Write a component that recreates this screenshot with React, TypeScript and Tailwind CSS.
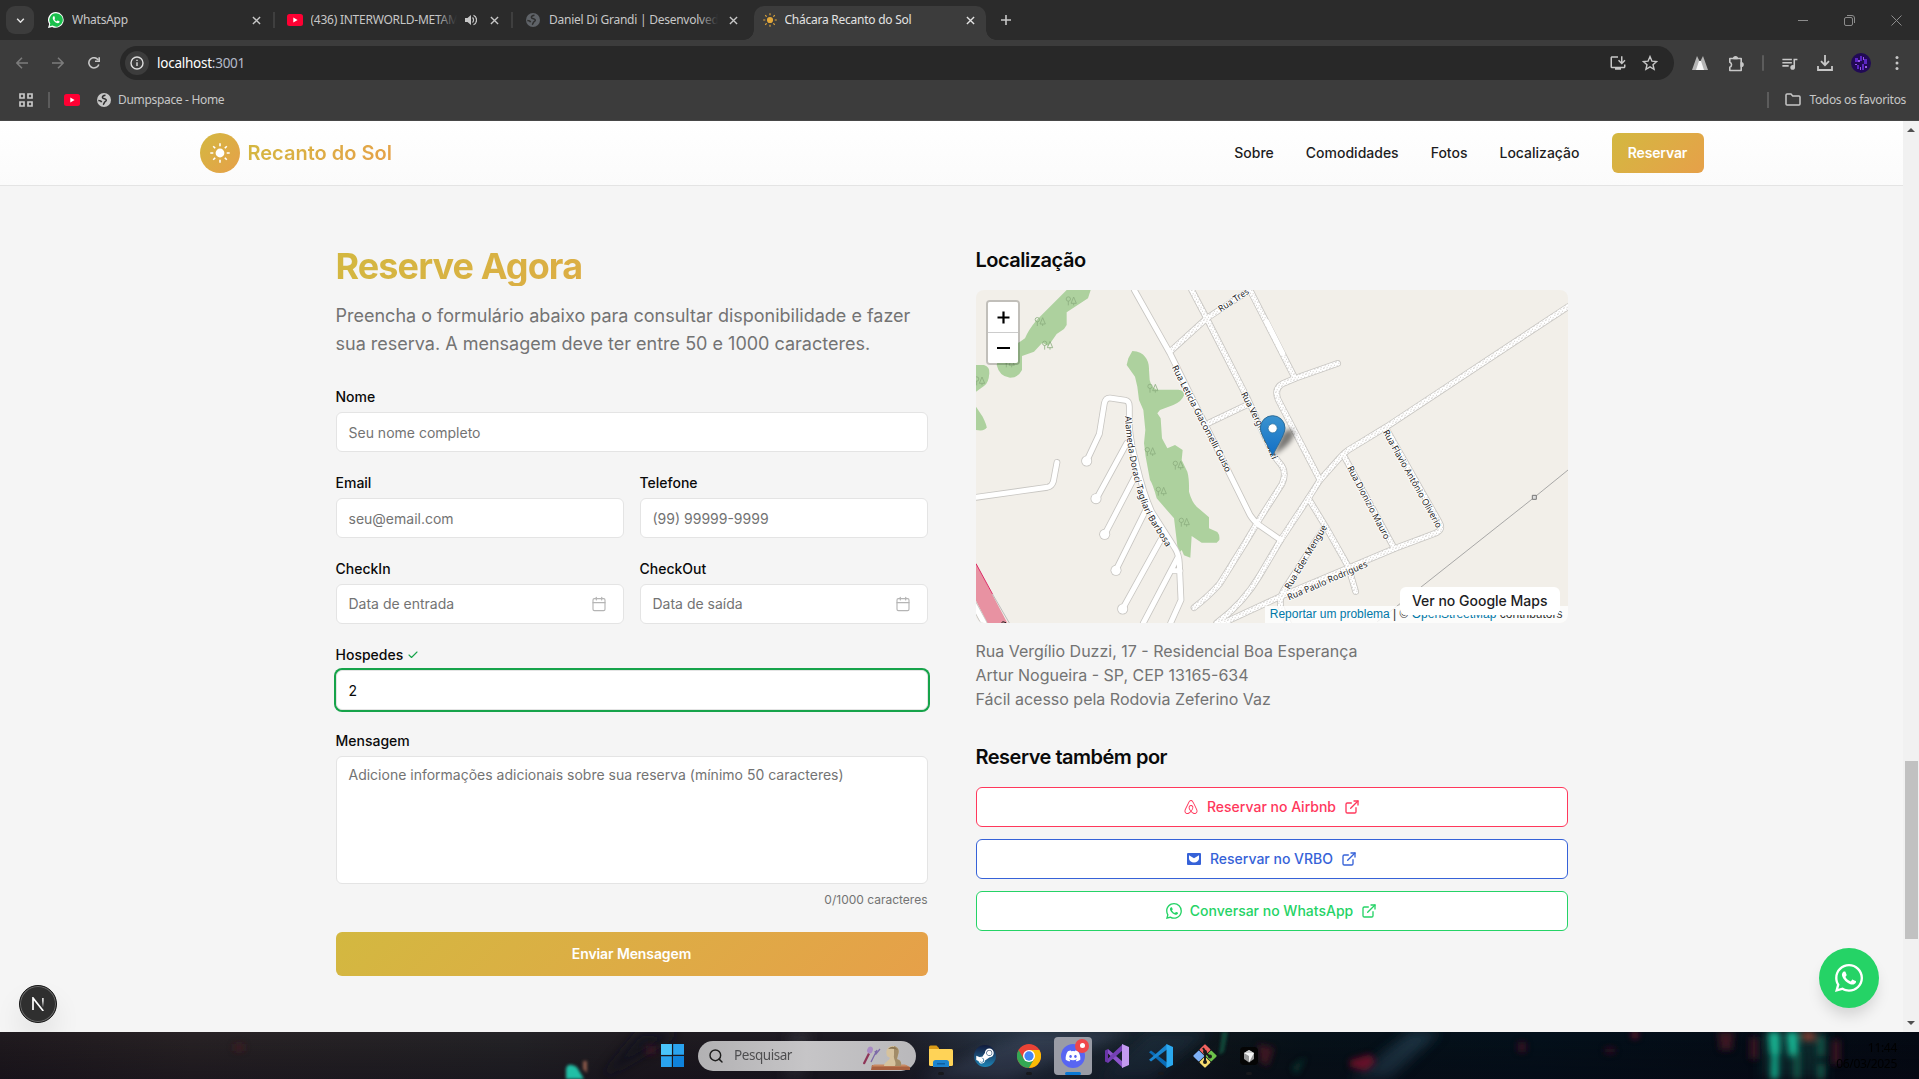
import React from 'react';
import type { ReactNode } from 'react';
import { FaAirbnb, FaDiscord, FaSteamSymbol, FaWhatsapp } from 'react-icons/fa';
import { BsWhatsapp } from 'react-icons/bs';
import { MdOutlineInstallDesktop, MdOutlineQueueMusic } from 'react-icons/md';
import { Calendar, Check, ExternalLink, Search } from 'lucide-react';

/* ---------- small drawings ---------- */

const Close = ({ className = '' }: { className?: string }) => (
  <svg viewBox="0 0 10 10" className={`size-[9px] shrink-0 ${className}`} stroke="currentColor" strokeWidth="1.5">
    <path d="M1 1l8 8M9 1l-8 8" />
  </svg>
);

const Globe = ({ className = '' }: { className?: string }) => (
  <svg viewBox="0 0 16 16" className={`size-4 shrink-0 ${className}`}>
    <circle cx="8" cy="8" r="7" fill="currentColor" />
    <path
      d="M9.500 3.200C7.500 3.400 6.300 4.200 6.400 5.500c.2 1.500 2.800 1 3.700 2.100.6.900-.3 1.700-1.200 2.200-.7.500-.6 1.600-1.700 2.900M2.300 8.600c1.500 0 2.900.4 3.300 1.700"
      fill="none"
      stroke="#2f2f2f"
      strokeWidth="1.5"
    />
  </svg>
);

const YouTube = () => (
  <svg viewBox="0 0 16 12" className="h-3 w-4 shrink-0">
    <rect width="16" height="12" rx="2.500" fill="#f03" />
    <path d="M6.300 3.500v5L10.600 6z" fill="#fff" />
  </svg>
);

const SunIcon = ({ className = '', color = '#fff' }: { className?: string; color?: string }) => (
  <svg viewBox="0 0 20 20" className={className} fill={color} stroke={color} strokeWidth="1.6">
    <circle cx="10" cy="10" r="4.400" stroke="none" />
    <path d="M10 .3v3M10 16.700v3M.3 10h3M16.700 10h3M3.200 3.200l2 2M14.800 14.800l2 2M3.200 16.800l2-2M14.800 5.200l2-2" />
  </svg>
);

/* ---------- browser chrome ---------- */

type TabProps = { icon: ReactNode; title: string; audio?: boolean; active?: boolean; divider?: boolean };

const Tab = ({ icon, title, audio, active, divider }: TabProps) => (
  <div
    className={`relative flex h-[34px] items-center pb-[6px] ${
      active
        ? 'ml-[2px] w-[232px] rounded-t-[10px] bg-[#3c3c3c] pr-[11px] pl-[9px] text-[#e3e3e3]'
        : 'w-[238.5px] pr-[14px] pl-[12px] text-[#c7c7c7]'
    }`}
  >
    {icon}
    <span className="relative ml-2 min-w-0 flex-1 overflow-hidden whitespace-nowrap">
      {title}
      {!active && <span className="absolute inset-y-0 right-0 w-5 bg-linear-to-r from-transparent to-[#2b2b2b]" />}
    </span>
    {audio && (
      <svg viewBox="0 0 12 12" className="mr-[13px] ml-2 size-3" fill="currentColor">
        <path d="M0 4h2.500L6 1v10L2.500 8H0z" />
        <path d="M7.500 3.500a3.500 3.500 0 010 5M8.500 1.200a5.300 5.300 0 010 9.600" fill="none" stroke="currentColor" strokeWidth="1.200" />
      </svg>
    )}
    <Close className={active || audio ? '' : 'ml-[11px]'} />
    {divider && <span className="absolute top-[6px] right-0 h-4 w-[2px] bg-[#3f3f3f]" />}
    {active && (
      <>
        <span className="absolute bottom-0 -left-[10px] size-[10px] bg-[radial-gradient(circle_at_0_0,transparent_9.500px,#3c3c3c_10px)]" />
        <span className="absolute -right-[10px] bottom-0 size-[10px] bg-[radial-gradient(circle_at_100%_0,transparent_9.500px,#3c3c3c_10px)]" />
      </>
    )}
  </div>
);

const WhatsAppTabIcon = () => (
  <svg viewBox="0 0 16 16" className="size-4 shrink-0">
    <path d="M8 0a7.900 7.900 0 00-6.800 12L0 16l4.100-1.100A7.900 7.900 0 108 0z" fill="#fff" />
    <path d="M8 1.200a6.700 6.700 0 00-5.700 10.200L1.700 14.300l2.900-.7A6.700 6.700 0 108 1.200z" fill="#1bc04d" />
    <path d="M5.500 4.200c-1.600 1.300-.6 3.600 1 5.200s3.800 2.500 5 .9c.3-.5.2-.8-.1-1l-1.500-.7c-.6-.2-.9.9-1.400.7C7.400 8.800 6.900 8 6.500 7.200c-.1-.4.7-.7.5-1.200l-.6-1.500c-.2-.4-.5-.5-.9-.3z" fill="#fff" />
  </svg>
);

const TabStrip = () => (
  <div className="flex h-10 items-end bg-[#2b2b2b] text-[12px]">
    <div className="mb-[6px] ml-[6px] flex size-7 items-center justify-center rounded-[9px] bg-[#3c3c3c]">
      <svg viewBox="0 0 10 6" className="h-[5px] w-[9px]" fill="none" stroke="#e3e3e3" strokeWidth="1.800">
        <path d="M1 1l4 4 4-4" />
      </svg>
    </div>
    <div className="ml-[2px] flex items-end tracking-[-0.25px]">
      <Tab icon={<WhatsAppTabIcon />} title="WhatsApp" divider />
      <Tab icon={<YouTube />} title="(436) INTERWORLD-METAM" audio divider />
      <Tab icon={<Globe className="text-[#5f6368]" />} title="Daniel Di Grandi | Desenvolvedor" />
      <Tab icon={<SunIcon className="size-[14px] shrink-0" color="#e3a83a" />} title="Chácara Recanto do Sol" active />
    </div>
    <svg viewBox="0 0 12 12" className="mb-[14px] ml-[14px] size-3" stroke="#c7c7c7" strokeWidth="1.600">
      <path d="M6 1v10M1 6h10" />
    </svg>
    <div className="mr-[17px] mb-[14px] ml-auto flex items-center gap-[36px] text-[#8c8c8c]">
      <span className="h-px w-[10px] bg-current" />
      <svg viewBox="0 0 11 11" className="size-[11px]" fill="none" stroke="currentColor">
        <rect x=".5" y="2.500" width="8" height="8" rx="1.500" />
        <path d="M3 .5h5a2.500 2.500 0 012.500 2.500v5" />
      </svg>
      <svg viewBox="0 0 11 11" className="size-[11px]" stroke="currentColor">
        <path d="M.5.5l10 10M10.500.5l-10 10" />
      </svg>
    </div>
  </div>
);

const Toolbar = () => (
  <div className="flex h-[46px] items-center bg-[#3c3c3c]">
    <div className="ml-4 flex items-center gap-6">
      <svg viewBox="0 0 12 12" className="size-3" fill="none" stroke="#7c7c7c" strokeWidth="1.500">
        <path d="M12 6H1M6 .8L.9 6 6 11.200" />
      </svg>
      <svg viewBox="0 0 12 12" className="size-3" fill="none" stroke="#7c7c7c" strokeWidth="1.500">
        <path d="M0 6h11M6 .8L11.100 6 6 11.200" />
      </svg>
      <svg viewBox="0 0 12 12" className="size-3" fill="none" stroke="#c7c7c7" strokeWidth="1.600">
        <path d="M10.800 7.400A5.100 5.100 0 1110 2.700M11.200.2v4.100H7" />
      </svg>
    </div>
    <div className="ml-[20px] flex h-[34px] w-[1554px] items-center rounded-full bg-[#282828] pl-[5px] text-[13.500px] text-[#c7c7c7]">
      <span className="flex size-6 items-center justify-center rounded-full bg-[#3c3c3c]">
        <svg viewBox="0 0 14 14" className="size-[14px]" fill="none" stroke="#dcdcdc" strokeWidth="1.400">
          <circle cx="7" cy="7" r="6" />
          <path d="M7 6.300V10M7 3.800v1.300" />
        </svg>
      </span>
      <span className="ml-2 tracking-[-0.25px] text-white">
        localhost<span className="text-[#b4bac8]">:3001</span>
      </span>
      <MdOutlineInstallDesktop className="ml-auto size-[18px]" />
      <svg viewBox="0 0 16 16" className="mr-[16px] ml-[15px] size-4" fill="none" stroke="currentColor" strokeWidth="1.400">
        <path d="M8 1.600l1.900 4.500 4.800.4-3.700 3.200 1.100 4.700L8 11.900l-4.100 2.500L5 9.700 1.300 6.500l4.800-.4z" />
      </svg>
    </div>
    <div className="flex flex-1 items-center text-[#c7c7c7]">
      <svg viewBox="0 0 16 14" className="ml-[18px] h-[14px] w-4">
        <path d="M0 14L5 0l2.500 5L6 14zM16 14L11 0 8.500 5 10 14z" fill="#b5b5b5" />
        <path d="M4 14l3-9h2l3 9z" fill="#f5f5f5" />
      </svg>
      <svg viewBox="0 0 17 17" className="ml-[20px] size-[17px]" fill="none" stroke="currentColor" strokeWidth="1.600" strokeLinejoin="round">
        <path d="M1.800 3.500h11.400v12H1.800v-3.300a2.600 2.600 0 000-4.900z" />
        <path d="M5.700 3.500a1.800 1.800 0 013.600 0zM13.200 7.700a1.800 1.800 0 010 3.600z" fill="currentColor" />
      </svg>
      <span className="ml-[17px] h-4 w-[2px] rounded bg-[#5c5c5c]" />
      <MdOutlineQueueMusic className="ml-[16px] size-[19px]" />
      <svg viewBox="0 0 16 16" className="ml-[18px] size-4" fill="none" stroke="currentColor" strokeWidth="1.800">
        <path d="M8 0v10M4 6.200l4 4 4-4M1 11v4h14v-4" />
      </svg>
      <svg viewBox="0 0 20 20" className="ml-[18px] size-5">
        <circle cx="10" cy="10" r="10" fill="#210a55" />
        <path d="M4 5h3v4H4zM9 3h2v5H9zM13 6h3v5h-3zM6 12h2v4H6zM11 11h2v6h-2z" fill="#5b25c4" />
        <path d="M7 7h2v2H7zM12 4h1v3h-1zM4 11h2v1H4zM14 13h2v2h-2zM9 14h1v3H9z" fill="#9a55e8" />
      </svg>
      <svg viewBox="0 0 4 16" className="ml-[24px] h-4 w-1" fill="currentColor">
        <circle cx="2" cy="2.500" r="1.500" />
        <circle cx="2" cy="8" r="1.500" />
        <circle cx="2" cy="13.500" r="1.500" />
      </svg>
    </div>
  </div>
);

const Bookmarks = () => (
  <div className="flex h-[35px] items-center border-b border-[#474747] bg-[#3c3c3c] pb-[7px] text-[12px] tracking-[-0.32px] text-[#c7c7c7]">
    <svg viewBox="0 0 14 14" className="ml-[19px] size-[14px]" fill="none" stroke="currentColor" strokeWidth="1.700">
      <path d="M1 1h4v4H1zM9 1h4v4H9zM1 9h4v4H1zM9 9h4v4H9z" />
    </svg>
    <span className="mr-[14px] ml-[15px] h-4 w-[2px] bg-[#5c5c5c]" />
    <YouTube />
    <Globe className="mr-[6px] ml-[16px] text-[#c7c7c7]" />
    Dumpspace - Home
    <span className="mr-[16px] ml-auto h-4 w-[2px] bg-[#5c5c5c]" />
    <svg viewBox="0 0 16 13" className="mr-[8px] h-[13px] w-4" fill="none" stroke="currentColor" strokeWidth="1.500">
      <path d="M1 2a1 1 0 011-1h4l1.700 2H14a1 1 0 011 1v7a1 1 0 01-1 1H2a1 1 0 01-1-1z" />
    </svg>
    <span className="mr-[13px]">Todos os favoritos</span>
  </div>
);

/* ---------- site ---------- */

const SiteHeader = () => (
  <header className="h-[65px] shrink-0 border-b border-[#e4e4e4] bg-linear-to-b from-white to-[#fbfbfb]">
    <div className="mx-auto flex h-16 w-[1536px] items-center px-4">
      <div className="flex items-center gap-2">
        <span className="flex size-10 items-center justify-center rounded-full bg-linear-135 from-[#d3b840] to-[#e6a049]">
          <SunIcon className="size-5" />
        </span>
        <span className="bg-linear-135 from-[#d3b840] to-[#e6a049] bg-clip-text text-xl font-semibold text-transparent">
          Recanto do Sol
        </span>
      </div>
      <nav className="ml-auto flex items-center gap-8 text-sm font-medium text-[#1d1d1f]">
        <a>Sobre</a>
        <a>Comodidades</a>
        <a>Fotos</a>
        <a>Localização</a>
        <button className="h-10 w-[92px] rounded-md bg-linear-135 from-[#d3b840] to-[#e6a049] font-semibold tracking-[-0.15px] text-white">
          Reservar
        </button>
      </nav>
    </div>
  </header>
);

type FieldProps = { label: string; placeholder?: string; value?: string; date?: boolean; valid?: boolean };

const Field = ({ label, placeholder, value, date, valid }: FieldProps) => (
  <div className="flex-1">
    <label className="mb-2 flex h-[14px] items-center gap-1 text-sm leading-none font-medium text-[#0a0a0a]">
      {label}
      {valid && <Check className="size-3 text-[#16a34a]" strokeWidth={2.2} />}
    </label>
    <div
      className={`flex h-10 items-center rounded-md border border-[#e4e4e4] bg-white px-3 text-sm ${
        valid ? 'text-[#0a0a0a] ring-2 ring-[#16a34a]' : 'text-[#737373]'
      } ${date ? '' : 'pt-[2px]'}`}
    >
      {value ?? placeholder}
      {date && <Calendar className="mr-[4px] ml-auto size-4 text-[#b5b5b5]" strokeWidth={1.7} />}
    </div>
  </div>
);

const BookingForm = () => (
  <div className="w-[592px]">
    <h2 className="bg-linear-135 from-[#d3b840] to-[#e6a049] bg-clip-text text-4xl leading-10 font-bold tracking-tight text-transparent">
      Reserve Agora
    </h2>
    <p className="mt-4 text-lg leading-7 text-[#737373]">
      Preencha o formulário abaixo para consultar disponibilidade e fazer
      <br />
      sua reserva. A mensagem deve ter entre 50 e 1000 caracteres.
    </p>
    <div className="mt-8 flex flex-col gap-6">
      <Field label="Nome" placeholder="Seu nome completo" />
      <div className="flex gap-4">
        <Field label="Email" placeholder="seu@email.com" />
        <Field label="Telefone" placeholder="(99) 99999-9999" />
      </div>
      <div className="flex gap-4">
        <Field label="CheckIn" placeholder="Data de entrada" date />
        <Field label="CheckOut" placeholder="Data de saída" date />
      </div>
      <Field label="Hospedes" value="2" valid />
      <div>
        <label className="mb-2 block text-sm leading-none font-medium text-[#0a0a0a]">Mensagem</label>
        <div className="h-32 rounded-md border border-[#e4e4e4] bg-white px-3 py-2 text-sm text-[#737373]">
          Adicione informações adicionais sobre sua reserva (mínimo 50 caracteres)
        </div>
        <div className="mt-2 text-right text-xs text-[#737373]">0/1000 caracteres</div>
      </div>
      <button className="h-11 rounded-md bg-linear-135 from-[#d3b840] to-[#e6a049] text-sm font-semibold tracking-[-0.1px] text-white">
        Enviar Mensagem
      </button>
    </div>
  </div>
);

const pavedRoads = [
  'M523 180L630 370L870 855Q880 872 900 887L962 930',
  'M380 693L418 612L433 520Q437 503 450 504L496 511Q508 513 508 530V590Q512 640 530 705Q550 790 575 845L645 955Q657 975 658 1000L663 1110L632 1179',
  'M500 640L410 805',
  'M522 745L435 912',
  'M560 835L468 1020',
  'M602 930L488 1136',
  'M652 985L550 1179',
  'M640 1022H660',
  'M48 802L262 772Q276 769 280 755L291 697',
  'M40 1120L72 1179',
];

const gravelRoads = [
  'M695 180L740 265L860 500L940 675L966 708Q980 730 966 762L900 865L855 940L780 1060Q750 1095 702 1133',
  'M630 365L740 265L870 180',
  'M870 180L1005 445',
  'M1133 400L1005 445L970 460Q940 475 955 510L1080 750',
  'M1824 230L1280 590L1165 660Q1150 670 1138 685L1080 750L1045 805L962 930L900 1035Q850 1120 770 1179',
  'M1045 805L1100 895L1165 1010L1187 1085',
  'M1153 680L1303 955',
  'M1278 595L1437 875Q1452 900 1425 910L1305 955L960 1100L900 1128L790 1179',
  'M1095 890L975 1075Q958 1100 962 1130L985 1179',
  'M740 582L860 525',
];

const deadEnds = [[380, 693], [408, 806], [434, 913], [468, 1021], [488, 1137]];

const streets = [
  { id: 's1', d: 'M642 408L712 545L796 706L840 800', text: 'Rua Leticia Giacomelli Guiso', len: 356 },
  { id: 's2', d: 'M849 488L912 608L962 730', text: 'Rua Vergílio Duzzi', len: 220 },
  { id: 's3', d: 'M778 240L894 163', text: 'Rua Tres', len: 104 },
  { id: 's4', d: 'M503 558Q508 650 526 725Q544 810 574 865L650 985', text: 'Alameda Doraci Tagliari Barbosa', len: 415 },
  { id: 's5', d: 'M1275 602L1442 900', text: 'Rua Flavio Antônio Oliverio', len: 332 },
  { id: 's6', d: 'M1168 710L1294 950', text: 'Rua Dionizio Mauro', len: 244 },
  { id: 's7', d: 'M982 1076L1099 881', text: 'Rua Eder Mengue', len: 220 },
  { id: 's8', d: 'M984 1104L1244 992', text: 'Rua Paulo Rodrigues', len: 258 },
];

const trees = [[333, 212], [240, 274], [262, 345], [147, 398], [58, 452], [578, 474], [570, 664], [654, 705], [603, 783], [672, 876]];

const StreetMap = () => (
  <svg viewBox="48 180 1776 999" className="h-[333px] w-[592px]" preserveAspectRatio="none">
    <defs>
      <pattern id="gravel" width="18" height="18" patternUnits="userSpaceOnUse">
        <rect width="18" height="18" fill="#fff" />
        <path d="M1 2h3v3H1zM10 0h3v3h-3zM6 8h3v3H6zM14 10h3v3h-3zM2 14h3v3H2zM11 15h3v2h-3z" fill="#cfcdca" />
      </pattern>
      <linearGradient id="pin" x1="0" y1="0" x2="0" y2="1">
        <stop offset="0" stopColor="#3b93cf" />
        <stop offset="1" stopColor="#126fc6" />
      </linearGradient>
      <filter id="soft" x="-50%" y="-50%" width="200%" height="200%">
        <feGaussianBlur stdDeviation="8" />
      </filter>
    </defs>
    <rect x="48" y="180" width="1776" height="999" fill="#f2efe9" />
    <g fill="#add19e">
      <path d="M320 180H392L384 205L320 247V285L312 297L290 312L265 348L247 338L222 365L186 378V420Q175 443 150 443Q118 440 110 405L120 370L180 335L195 325Q205 300 230 270Z" />
      <path d="M48 405H72Q90 410 88 430Q86 460 72 468L48 485Z" />
      <path d="M48 530L68 560Q80 585 80 592Q75 605 48 600Z" />
      <path d="M517 363Q545 365 555 380Q568 395 567 420L569 450Q575 475 592 479H655Q672 480 672 496Q665 515 640 525L600 540L592 550L602 565L606 625L622 655L645 645L668 660L665 690L682 725Q688 745 687 785Q695 815 710 830L747 862V895L772 906Q780 915 778 930L770 938H725L695 918L691 983L672 976L665 960L655 972L642 865L590 805Q578 760 570 750L557 680L552 640L556 600L550 540L537 510L532 470L525 440L500 405L505 385Z" />
    </g>
    <g fill="none" stroke="#8dae80" strokeWidth="2.500">
      {trees.map(([x, y]) => (
        <g key={`${x}-${y}`}>
          <circle cx={x - 8} cy={y - 5} r="6.500" />
          <path d={`M${x - 8} ${y + 14}V${y + 1}M${x + 8} ${y + 14}V${y + 8}M${x} ${y + 8}h16L${x + 8} ${y - 11}z`} />
        </g>
      ))}
    </g>
    <path d="M40 985L48 1000L142 1179H82L48 1112L40 1100Z" fill="#e892a2" />
    <path d="M48 1001L98 1093" stroke="#dc2a67" strokeWidth="3" />
    <path d="M98 1093L148 1179" stroke="#bbb" strokeWidth="3" />
    <path d="M125 1179l3-4 10 3" stroke="#222" strokeWidth="3" fill="none" />
    <g fill="none" stroke="#c8c6c2" strokeWidth="20" strokeLinecap="round" strokeLinejoin="round">
      {gravelRoads.map((d) => (
        <path key={d} d={d} />
      ))}
      {pavedRoads.map((d) => (
        <path key={d} d={d} />
      ))}
      {deadEnds.map(([x, y]) => (
        <circle key={y} cx={x} cy={y} r="16.500" fill="#c8c6c2" stroke="none" />
      ))}
    </g>
    <g fill="none" stroke="url(#gravel)" strokeWidth="15" strokeLinecap="round" strokeLinejoin="round">
      {gravelRoads.map((d) => (
        <path key={d} d={d} />
      ))}
    </g>
    <g fill="none" stroke="#fff" strokeWidth="15" strokeLinecap="round" strokeLinejoin="round">
      <path d="M920 275L968 370" />
      {pavedRoads.map((d) => (
        <path key={d} d={d} />
      ))}
      {deadEnds.map(([x, y]) => (
        <circle key={y} cx={x} cy={y} r="14" fill="#fff" stroke="none" />
      ))}
    </g>
    <path d="M1824 720L1723 802L1252 1175" fill="none" stroke="#999" strokeWidth="2.500" />
    <path d="M1717 796h12v12h-12z" fill="#ddd" stroke="#777" strokeWidth="3" />
    <g fontFamily='"Noto Sans", sans-serif' fontSize="27" fill="#222" stroke="#fff" strokeWidth="5" strokeLinejoin="round" paintOrder="stroke">
      {streets.map((s) => (
        <g key={s.id}>
          <path id={s.id} d={s.d} fill="none" stroke="none" />
          <text dy="8">
            <textPath href={`#${s.id}`} textLength={s.len} lengthAdjust="spacingAndGlyphs">
              {s.text}
            </textPath>
          </text>
        </g>
      ))}
    </g>
    <path d="M938 677L968 610Q995 585 1002 610Q1000 640 938 677" fill="#000" opacity=".5" filter="url(#soft)" />
    <path
      d="M938 677C932 660 901 615 901 594A37 37 0 01975 594C975 615 944 660 938 677Z"
      fill="url(#pin)"
      stroke="#2e6c97"
      strokeWidth="3"
    />
    <circle cx="938" cy="595" r="13.500" fill="#fff" stroke="#2e6c97" strokeWidth="2" />
  </svg>
);

const MapCard = () => (
  <div className="relative mt-4 h-[333px] w-[592px] overflow-hidden rounded-lg">
    <StreetMap />
    <div className="absolute top-[10px] left-[10px] w-[34px] rounded-[4px] border-2 border-black/20 bg-clip-padding">
      <div className="flex h-[31px] items-center justify-center rounded-t-[2px] border-b border-[#ccc] bg-white">
        <svg viewBox="0 0 13 13" className="ml-px size-[13px]" stroke="#000" strokeWidth="2.200">
          <path d="M6.500 .5v12M.5 6.500h12" />
        </svg>
      </div>
      <div className="flex h-[30px] items-center justify-center rounded-b-[2px] bg-white">
        <span className="ml-[2px] h-[2px] w-[13px] bg-black" />
      </div>
    </div>
    <div className="absolute right-0 bottom-0 h-[17px] bg-white/80 px-[5px] font-['Liberation_Sans',sans-serif] text-[12px] leading-[16.800px] whitespace-nowrap text-[#333]">
      <span className="text-[#0078a8]">Reportar um problema</span> | © <span className="text-[#0078a8]">OpenStreetMap</span> contributors
    </div>
    <a className="absolute right-2 bottom-2 rounded-md bg-white px-3 py-1 text-sm font-medium text-[#1d1d1f]">Ver no Google Maps</a>
  </div>
);

const VrboIcon = () => (
  <svg viewBox="0 0 16 12" className="h-3 w-4">
    <path
      fillRule="evenodd"
      d="M2 0h12a1 1 0 011 1v10a1 1 0 01-1 1H2a1 1 0 01-1-1V1a1 1 0 011-1zM3 2.300L8 5.200l5-2.900V5.500a5 4 0 01-10 0z"
      fill="#3662d8"
    />
  </svg>
);

const channelTone = {
  airbnb: 'border-[#ff385c] text-[#ff385c]',
  vrbo: 'border-[#3662d8] text-[#3662d8]',
  whatsapp: 'border-[#25d366] text-[#25d366]',
};

const ChannelButton = ({ tone, icon, children }: { tone: keyof typeof channelTone; icon: ReactNode; children: ReactNode }) => (
  <button className={`flex h-10 w-full items-center justify-center gap-2 rounded-md border bg-white text-sm font-medium ${channelTone[tone]}`}>
    {icon}
    {children}
    <ExternalLink className="size-4" strokeWidth={2} />
  </button>
);

const LocationColumn = () => (
  <div className="w-[592px]">
    <h3 className="text-xl leading-7 font-semibold tracking-tight text-[#0a0a0a]">Localização</h3>
    <MapCard />
    <p className="mt-4 text-base leading-6 text-[#737373]">
      Rua Vergílio Duzzi, 17 - Residencial Boa Esperança
      <br />
      Artur Nogueira - SP, CEP 13165-634
      <br />
      Fácil acesso pela Rodovia Zeferino Vaz
    </p>
    <h3 className="mt-8 text-xl leading-7 font-semibold tracking-tight text-[#0a0a0a]">Reserve também por</h3>
    <div className="mt-4 flex flex-col gap-3">
      <ChannelButton tone="airbnb" icon={<FaAirbnb className="size-4" />}>
        Reservar no Airbnb
      </ChannelButton>
      <ChannelButton tone="vrbo" icon={<VrboIcon />}>
        Reservar no VRBO
      </ChannelButton>
      <ChannelButton tone="whatsapp" icon={<BsWhatsapp className="size-4" />}>
        Conversar no WhatsApp
      </ChannelButton>
    </div>
  </div>
);

const Scrollbar = () => (
  <div className="relative flex w-4 flex-col items-center justify-between bg-[#f1f1f1] py-[7px]">
    <svg viewBox="0 0 8 4" className="h-1 w-2">
      <path d="M0 4l4-4 4 4z" fill="#505050" />
    </svg>
    <span className="absolute top-[640px] left-[2px] h-[178px] w-[13px] bg-[#c1c1c1]" />
    <svg viewBox="0 0 8 4" className="h-1 w-2">
      <path d="M0 0l4 4 4-4z" fill="#505050" />
    </svg>
  </div>
);

const DevBadge = () => (
  <div className="absolute bottom-[9px] left-[19px] flex size-[38px] items-center justify-center rounded-full border border-[#171717] bg-[#2f2f2f] shadow-[inset_0_0_0_1px_#6a6a6a,0_16px_32px_-8px_rgba(0,0,0,0.24)]">
    <svg viewBox="0 0 14 14" className="size-[14px]" fill="none" strokeWidth="1.700">
      <defs>
        <linearGradient id="fade" x1="0" y1="0" x2="0" y2="1">
          <stop offset=".3" stopColor="#fff" />
          <stop offset="1" stopColor="#fff" stopOpacity="0" />
        </linearGradient>
      </defs>
      <path d="M2 13V1l10.300 13" stroke="#fff" />
      <path d="M11.200 1h1.400v9.500h-1.400z" fill="url(#fade)" />
    </svg>
  </div>
);

/* ---------- taskbar ---------- */

const Wallpaper = () => (
  <svg viewBox="0 0 1919 47" className="absolute inset-0 h-[47px] w-full" preserveAspectRatio="none">
    <defs>
      <linearGradient id="wp" x1="0" x2="1">
        <stop offset="0" stopColor="#211b20" />
        <stop offset=".1" stopColor="#292326" />
        <stop offset=".27" stopColor="#252428" />
        <stop offset=".34" stopColor="#211c22" />
        <stop offset=".46" stopColor="#1e1c25" />
        <stop offset=".52" stopColor="#273343" />
        <stop offset=".58" stopColor="#1b2631" />
        <stop offset=".64" stopColor="#0d151b" />
        <stop offset=".68" stopColor="#07121a" />
        <stop offset=".8" stopColor="#04111c" />
        <stop offset="1" stopColor="#050a14" />
      </linearGradient>
      <linearGradient id="wpShade" x1="0" y1="0" x2="0" y2="1">
        <stop offset="0" stopColor="#000" stopOpacity="0" />
        <stop offset="1" stopColor="#080512" stopOpacity=".35" />
      </linearGradient>
      <filter id="b1" x="-50%" y="-50%" width="200%" height="200%">
        <feGaussianBlur stdDeviation="1.500" />
      </filter>
      <filter id="b3" x="-10%" y="-50%" width="120%" height="200%">
        <feGaussianBlur stdDeviation="3" />
      </filter>
      <filter id="b5" x="-50%" y="-50%" width="200%" height="200%">
        <feGaussianBlur stdDeviation="6" />
      </filter>
    </defs>
    <rect width="1919" height="47" fill="url(#wp)" />
    <g filter="url(#b5)">
      <path d="M920 47L1030 0H1130L1010 47z" fill="#435066" opacity=".55" />
      <path d="M1150 0h60l-60 47h-50z" fill="#23394a" opacity=".5" />
      <path d="M1350 47L1410 0h30l-50 47z" fill="#1e3544" />
      <path d="M790 0h20l-6 47h-20z" fill="#3a3a44" opacity=".6" />
      <path d="M600 47l40-47h40z" fill="#151820" />
      <path d="M1762 0h64v47h-64z" fill="#0b3b3a" opacity=".7" />
    </g>
    <rect width="1919" height="47" fill="url(#wpShade)" />
    <g filter="url(#b1)">
      <path d="M566 47V37q1-5 6-4t6 4l6 10z" fill="#20bfa6" />
      <path d="M583 29h4v12l-4-4z" fill="#8a5a48" />
      <path d="M1222 0h6l-4 20-5 3z" fill="#14523f" opacity=".8" />
    </g>
    <g filter="url(#b3)">
      <path d="M1768 0h12v22h-10zM1772 20h6v27h-7zM1786 0h12v24h-9z" fill="#17b795" opacity=".95" />
      <path d="M1794 20h6v27h-6zM1818 4h6v20h-6zM1818 32h6v15h-6z" fill="#125a4c" />
      <path d="M1801 0h14v9h-12z" fill="#7a3d33" />
      <path d="M1350 28l20-6 6 8-10 9-16-4z" fill="#7c0d2b" opacity=".8" />
      <path d="M646 14h10v8h-10z" fill="#4a1527" opacity=".7" />
      <path d="M1258 12l16 4-6 18-8-4z" fill="#3c1220" />
      <path d="M1718 0h16l-2 18h-12zM1750 5h8v22h-8zM1832 8h8v24h-8z" fill="#3b1320" />
      <path d="M1632 0h6v6h-6z" fill="#7c0d2b" />
      <path d="M1605 16h10v5h-10zM1518 10h8v10h-8z" fill="#3b0f20" />
      <path d="M234 12h10v7h-10z" fill="#4d1a25" opacity=".7" />
      <path d="M1292 35l14-10-10 18z" fill="#0e4436" opacity=".7" />
    </g>
  </svg>
);

const SearchArt = () => (
  <svg viewBox="0 0 50 28" className="ml-auto h-7 w-[50px]">
    <path d="M1 21L6 11l2 1-5 10q-2 1-2-1z" fill="#8e3557" />
    <ellipse cx="8" cy="8" rx="2.800" ry="3.500" transform="rotate(20 8 8)" fill="#a98bc4" />
    <path d="M9 20l6-12M13 9l1 3 4-5" stroke="#7d6aa8" strokeWidth="1.300" fill="none" />
    <path d="M10 23h33l5 2v3H9z" fill="#a8603f" />
    <path d="M12 22.500h31l4 2H9z" fill="#c98a63" />
    <path d="M22 24c0-4 5-5 6-8l-3-2c-2-6 1-10 6-10s7 4 5 9l-1 4c3 1 5 3 4 7z" fill="#d6c29d" />
    <path d="M32 4c4 1 6 4 4 9l-1 4c3 1 5 3 4 7h-6c2-4-2-7-1-11z" fill="#a28c68" />
    <path d="M26 7q5-5 10 1-5-2-10-1z" fill="#8a7452" />
  </svg>
);

const FolderIcon = () => (
  <svg viewBox="0 0 24 22" className="h-[22px] w-6">
    <path d="M0 2a1.500 1.500 0 011.500-1.500h6L10 3v4H0z" fill="#d99a16" />
    <path d="M0 4h22.500A1.500 1.500 0 0124 5.500v14a1.500 1.500 0 01-1.500 1.500h-21A1.500 1.500 0 010 19.500z" fill="#ffd357" />
    <path d="M4 22v-4.500A2.500 2.500 0 016.500 15h11a2.500 2.500 0 012.500 2.500V22z" fill="#1c84cf" />
    <path d="M8 18h8v1.500H8z" fill="#0f5f9f" />
  </svg>
);

const SteamIcon = () => (
  <span className="flex size-[22px] items-center justify-center rounded-full bg-linear-to-b from-[#101a3c] to-[#1b86b8]">
    <FaSteamSymbol className="size-[20px] text-white" />
  </span>
);

const ChromeIcon = () => (
  <svg viewBox="0 0 48 48" className="size-6">
    <circle cx="24" cy="24" r="24" fill="#ea4335" />
    <path d="M3.200 12A24 24 0 0024 48l10.400-18H13.600z" fill="#34a853" />
    <path d="M24 48A24 24 0 0044.800 12H24l10.400 18z" fill="#fbbc05" />
    <circle cx="24" cy="24" r="12" fill="#fff" />
    <circle cx="24" cy="24" r="9.300" fill="#4285f4" />
  </svg>
);

const VisualStudioIcon = () => (
  <svg viewBox="0 0 24 24" className="size-6">
    <path d="M0 6.500L3 5v14l-3-1.500z" fill="#6a35a8" />
    <path d="M3 5l15 13v6L3 10z" fill="#8d55cc" />
    <path d="M3 19L18 6V0L3 14z" fill="#7440b4" />
    <path d="M17 0l7 3v18l-7 3z" fill="#c39af0" />
    <path d="M3 9.500v5L5.500 12z" fill="#1b1d26" />
  </svg>
);

const VsCodeIcon = () => (
  <svg viewBox="0 0 24 24" className="size-6">
    <path d="M0 8.200l2-1.700 16 12V24z" fill="#0a6bb5" />
    <path d="M0 15.800l2 1.700 16-12V0z" fill="#1a86d0" />
    <path d="M17.500 0L24 3v18l-6.500 3z" fill="#2aa9f0" />
  </svg>
);

const GitIcon = () => (
  <svg viewBox="0 0 24 24" className="size-6">
    <g transform="rotate(45 12 12)">
      <rect x="3.500" y="3.500" width="8.200" height="8.200" rx="1" fill="#f0625f" />
      <rect x="12.300" y="3.500" width="8.200" height="8.200" rx="1" fill="#6cc24a" />
      <rect x="3.500" y="12.300" width="8.200" height="8.200" rx="1" fill="#7db0f5" />
      <rect x="12.300" y="12.300" width="8.200" height="8.200" rx="1" fill="#f7dc6f" />
    </g>
    <path d="M10 4l2 3v12M12 8l5 5" stroke="#1a1a1a" strokeWidth="2" fill="none" />
    <circle cx="12" cy="8" r="2" fill="#1a1a1a" />
    <circle cx="17" cy="12.500" r="2" fill="#1a1a1a" />
    <circle cx="12" cy="18" r="2" fill="#1a1a1a" />
  </svg>
);

const CursorIcon = () => (
  <svg viewBox="0 0 18 18" className="size-[18px]">
    <rect width="18" height="18" rx="4" fill="#050505" />
    <path d="M9 3l5 3v6l-5 3.500L4 12V6z" fill="#9a9a9a" />
    <path d="M4 6h10L9 15.500V9z" fill="#f4f4f4" />
    <path d="M9 3l5 3H4z" fill="#cfcfcf" />
  </svg>
);

const TaskbarApp = ({ children, dot, active }: { children: ReactNode; dot?: boolean; active?: boolean }) => (
  <div className="relative flex h-[47px] w-11 items-center justify-center">
    {active && <span className="absolute top-[5px] h-[38px] w-[38px] rounded-[4px] bg-[#9a9ca6]" />}
    <span className="relative flex">{children}</span>
    {dot && <span className="absolute bottom-[4px] h-[3px] w-[6px] rounded-full bg-[#17181c]" />}
    {active && <span className="absolute bottom-[4px] h-[3px] w-4 rounded-full bg-[#0a78d4]" />}
  </div>
);

const Taskbar = () => (
  <div className="relative h-[47px] overflow-hidden bg-[#1a1a20]">
    <Wallpaper />
    <div className="relative flex h-[47px] items-center pl-[661px]">
      <svg viewBox="0 0 24 24" className="size-[23px]">
        <path d="M0 0h11.300v11.300H0zM12.700 0H24v11.300H12.700zM0 12.700h11.300V24H0zM12.700 12.700H24V24H12.700z" fill="#2aa3ee" />
        <path d="M0 0h11.300v11.300H0z" fill="#4ac4fb" />
        <path d="M12.700 12.700H24V24H12.700z" fill="#0f83dc" />
      </svg>
      <div className="ml-[14px] flex h-[30px] w-[218px] items-center rounded-full bg-linear-to-r from-[#b2b1b3] via-[#c6c5c7] to-[#b9b8bb] pr-1 pl-[10px]">
        <Search className="size-4 text-[#1e1e1e]" strokeWidth={2.200} />
        <span className="ml-[10px] text-[13.500px] tracking-[-0.45px] text-[#4e4e50]">Pesquisar</span>
        <SearchArt />
      </div>
      <div className="ml-[3px] flex">
        <TaskbarApp dot>
          <FolderIcon />
        </TaskbarApp>
        <TaskbarApp>
          <SteamIcon />
        </TaskbarApp>
        <TaskbarApp dot>
          <ChromeIcon />
        </TaskbarApp>
        <TaskbarApp active>
          <span className="relative flex size-6 items-center justify-center rounded-full bg-[#5865f2]">
            <FaDiscord className="size-4 text-white" />
            <span className="absolute -top-[5px] -right-[4px] flex size-[14px] items-center justify-center rounded-full bg-[#f0474a]">
              <span className="size-[5px] rounded-full bg-white" />
            </span>
          </span>
        </TaskbarApp>
        <TaskbarApp>
          <VisualStudioIcon />
        </TaskbarApp>
        <TaskbarApp dot>
          <VsCodeIcon />
        </TaskbarApp>
        <TaskbarApp>
          <GitIcon />
        </TaskbarApp>
        <TaskbarApp dot>
          <CursorIcon />
        </TaskbarApp>
      </div>
      <div className="mr-[22px] ml-auto text-right text-[12px] leading-4 tracking-[-0.3px] text-black">
        11:44
        <br />
        06/03/2025
      </div>
    </div>
  </div>
);

export default function App() {
  return (
    <div className="flex h-[1079px] w-[1919px] flex-col overflow-hidden bg-[#f5f5f5] font-['Noto_Sans',sans-serif]">
      <TabStrip />
      <Toolbar />
      <Bookmarks />
      <div className="flex h-[911px]">
        <main className="relative flex w-[1903px] flex-col bg-[#f5f5f5] font-['Inter',sans-serif]">
          <SiteHeader />
          <section className="mx-auto mt-[60px] flex w-[1232px] gap-12">
            <BookingForm />
            <LocationColumn />
          </section>
          <DevBadge />
          <a className="absolute right-6 bottom-6 flex size-[60px] items-center justify-center rounded-full bg-[#25d366] text-white shadow-[0_10px_15px_-3px_rgba(0,0,0,0.15)]">
            <FaWhatsapp className="size-8" />
          </a>
        </main>
        <Scrollbar />
      </div>
      <Taskbar />
    </div>
  );
}
